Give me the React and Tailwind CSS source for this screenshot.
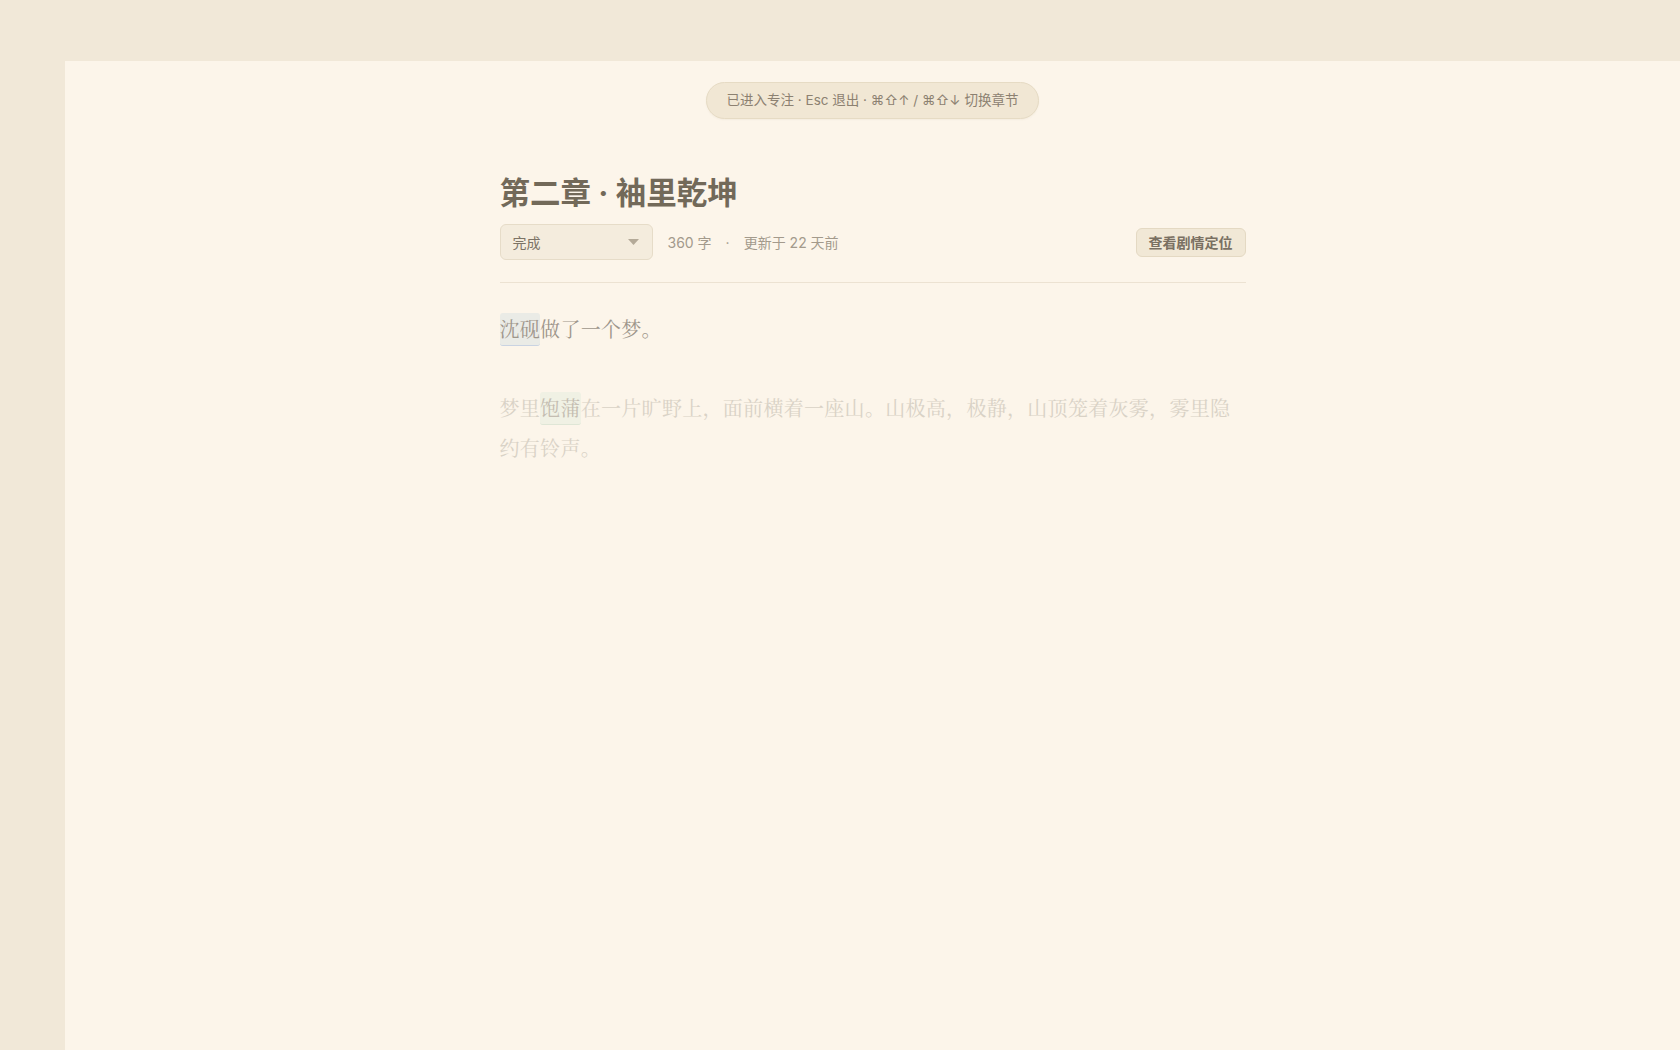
export default function App() {
  const ui = { fontFamily: '"Inter","Noto Sans CJK SC",sans-serif' };
  const serif = { fontFamily: '"Noto Serif CJK SC","Source Han Serif SC","Noto Sans CJK SC",serif' };
  return (
    <div className="w-full h-screen bg-[#f1e8d8] flex flex-col overflow-hidden" style={ui}>
      <div className="h-[61px] shrink-0" />
      <div className="flex flex-1 min-h-0">
        <div className="w-[65px] shrink-0" />
        <main className="flex-1 bg-[#fcf5ea] flex flex-col items-center pt-[21px]">
          <div className="h-[37px] px-[20px] flex items-center rounded-full bg-[#f1e7d4] border border-[#e6dbc4] text-[13.5px] text-[#8c8171] shadow-[0_1px_2px_rgba(120,100,60,0.06)]">
            已进入专注 · Esc 退出 · ⌘⇧↑ / ⌘⇧↓ 切换章节
          </div>
          <div className="w-[746px] mt-[56px]">
            <h1 className="text-[30.5px] leading-[36px] font-bold text-[#726959]">第二章 · 袖里乾坤</h1>
            <div className="mt-[13px] flex items-center pb-[22px] border-b border-[#ece2d2]">
              <div className="w-[153px] h-[36px] rounded-[6px] bg-[#f4ecdd] border border-[#e6dcc8] flex items-center justify-between pl-[12px] pr-[13px] text-[14px] text-[#7c7365]">
                <span>完成</span>
                <svg width="11" height="6" viewBox="0 0 11 6"><path d="M0 0 L11 0 L5.5 6 Z" fill="#b4aa98" /></svg>
              </div>
              <span className="ml-[15px] text-[14px] text-[#a39a8c]">360 字</span>
              <span className="ml-[14px] text-[14px] text-[#a39a8c]">·</span>
              <span className="ml-[14px] text-[14px] text-[#a39a8c]">更新于 22 天前</span>
              <div className="flex-1" />
              <button className="h-[29px] px-[12px] rounded-[6px] bg-[#f1e8d6] border border-[#e4d9c3] text-[14px] font-semibold text-[#7a7062]">查看剧情定位</button>
            </div>
            <div className="pt-[26px] text-[20px] leading-[40px] tracking-[0.3px]" style={serif}>
              <p className="text-[#9e968b]">
                <span className="rounded-[3px] bg-[#eaebe6] border-b border-[#c9d3e2] pb-[2px] pt-[1px]">沈砚</span>做了一个梦。
              </p>
              <p className="mt-[39px] text-[#d9d2c6]">
                梦里<span className="rounded-[3px] bg-[#f0f1e4] border-b border-[#dfe6d6] text-[#c4bdb1] pb-[2px] pt-[1px]">饱蒲</span>在一片旷野上，面前横着一座山。山极高，极静，山顶笼着灰雾，雾里隐约有铃声。
              </p>
            </div>
          </div>
        </main>
      </div>
    </div>
  );
}
